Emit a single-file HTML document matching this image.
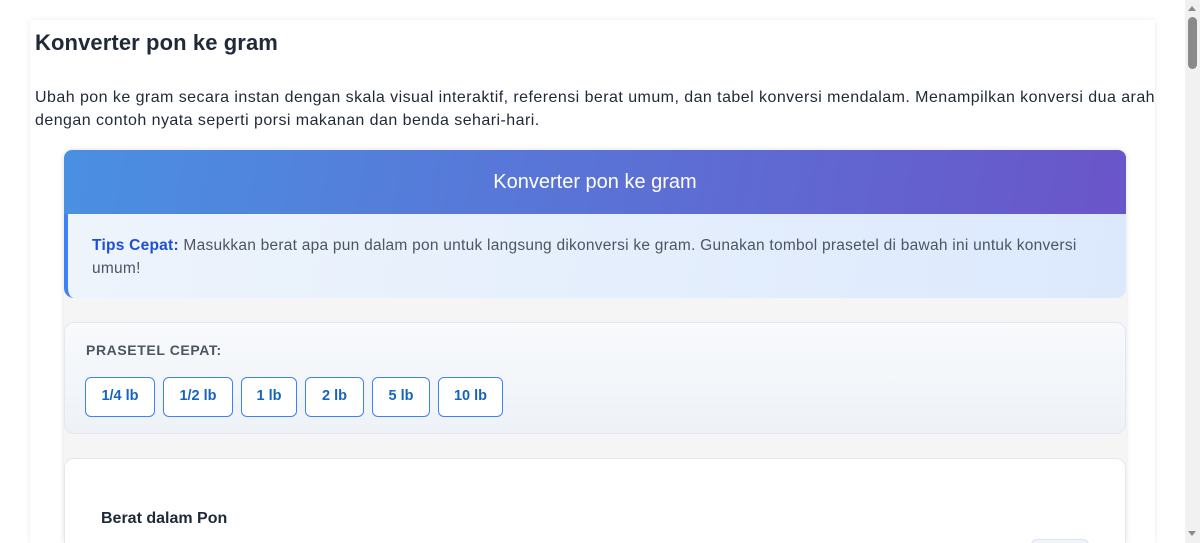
<!DOCTYPE html>
<html><head><meta charset="utf-8"><style>
*{box-sizing:border-box;margin:0;padding:0}
html,body{width:1200px;height:543px;overflow:hidden;background:#fff;font-family:"Liberation Sans",sans-serif;color:#1f2937}
.sb{position:absolute;left:1185px;top:0;width:15px;height:543px;background:#f1f1f1}
.sb .th{position:absolute;left:3px;top:17px;width:9px;height:52px;border-radius:5px;background:#8a8a8a}
.sb .up{position:absolute;left:3px;top:6px;width:0;height:0;border-left:4px solid transparent;border-right:4px solid transparent;border-bottom:5px solid #8a8a8a}
.sb .dn{position:absolute;left:3px;top:531px;width:0;height:0;border-left:4px solid transparent;border-right:4px solid transparent;border-top:5px solid #8a8a8a}
.outer{position:absolute;left:30px;top:20px;width:1125px;height:523px;background:#fff;box-shadow:0 0 6px rgba(0,0,0,.08)}
h1{position:absolute;left:35px;top:30px;font-size:22px;font-weight:bold;color:#1f2937;letter-spacing:.1px}
.p{position:absolute;left:35px;top:86px;font-size:16px;line-height:23px;white-space:nowrap;letter-spacing:.45px;color:#1f2937}
.card{position:absolute;left:64px;top:150px;width:1062px;height:393px;background:#f5f5f5;border-radius:8px 8px 0 0;box-shadow:0 0 6px rgba(0,0,0,.12);overflow:hidden}
.hdr{height:64px;background:linear-gradient(100deg,#4a90e2,#6a55c9);color:#fff;font-size:20px;text-align:center;line-height:64px}
.tips{position:absolute;left:0;top:64px;width:1062px;height:84px;background:linear-gradient(100deg,#eef4fc,#dce9fd);border-left:4px solid #3b82f6;border-radius:0 0 10px 10px;padding:20px 24px;font-size:15.5px;line-height:23px;color:#4b5563;letter-spacing:.25px}
.tips b{color:#1d4ed8}
.pre{position:absolute;left:0;top:172px;width:1062px;height:112px;background:linear-gradient(#f8fafc,#eef2f7);border:1px solid #e2e8f0;border-radius:10px}
.pre .l{position:absolute;left:21px;top:19px;font-size:14px;font-weight:bold;color:#4b5563;letter-spacing:.6px}
.btn{position:absolute;top:54px;height:40px;border:1.5px solid #3b82f6;border-radius:6px;background:#fff;color:#1565c0;font-size:14.5px;font-weight:bold;text-align:center;line-height:37px}
.inp{position:absolute;left:0;top:308px;width:1062px;height:200px;background:#fff;border:1px solid #e2e8f0;border-radius:10px}
.inp .l{position:absolute;left:36px;top:51px;font-size:16px;font-weight:bold;color:#1f2937}
.inp .bx{position:absolute;left:966px;top:80px;width:58px;height:20px;border:1px solid #dbe3ef;border-radius:6px;background:#f1f5fb}
</style></head><body>
<div class="outer"></div>
<h1>Konverter pon ke gram</h1>
<div class="p">Ubah pon ke gram secara instan dengan skala visual interaktif, referensi berat umum, dan tabel konversi mendalam. Menampilkan konversi dua arah<br>dengan contoh nyata seperti porsi makanan dan benda sehari-hari.</div>
<div class="card">
<div class="hdr">Konverter pon ke gram</div>
<div class="tips"><b>Tips Cepat:</b> Masukkan berat apa pun dalam pon untuk langsung dikonversi ke gram. Gunakan tombol prasetel di bawah ini untuk konversi umum!</div>
<div class="pre"><div class="l">PRASETEL CEPAT:</div>
<div class="btn" style="left:20px;width:70px">1/4 lb</div>
<div class="btn" style="left:98px;width:70px">1/2 lb</div>
<div class="btn" style="left:176px;width:56px">1 lb</div>
<div class="btn" style="left:240px;width:59px">2 lb</div>
<div class="btn" style="left:307px;width:58px">5 lb</div>
<div class="btn" style="left:373px;width:65px">10 lb</div>
</div>
<div class="inp"><div class="l">Berat dalam Pon</div><div class="bx"></div></div>
</div>
<div class="sb"><div class="up"></div><div class="th"></div><div class="dn"></div></div>
</body></html>
